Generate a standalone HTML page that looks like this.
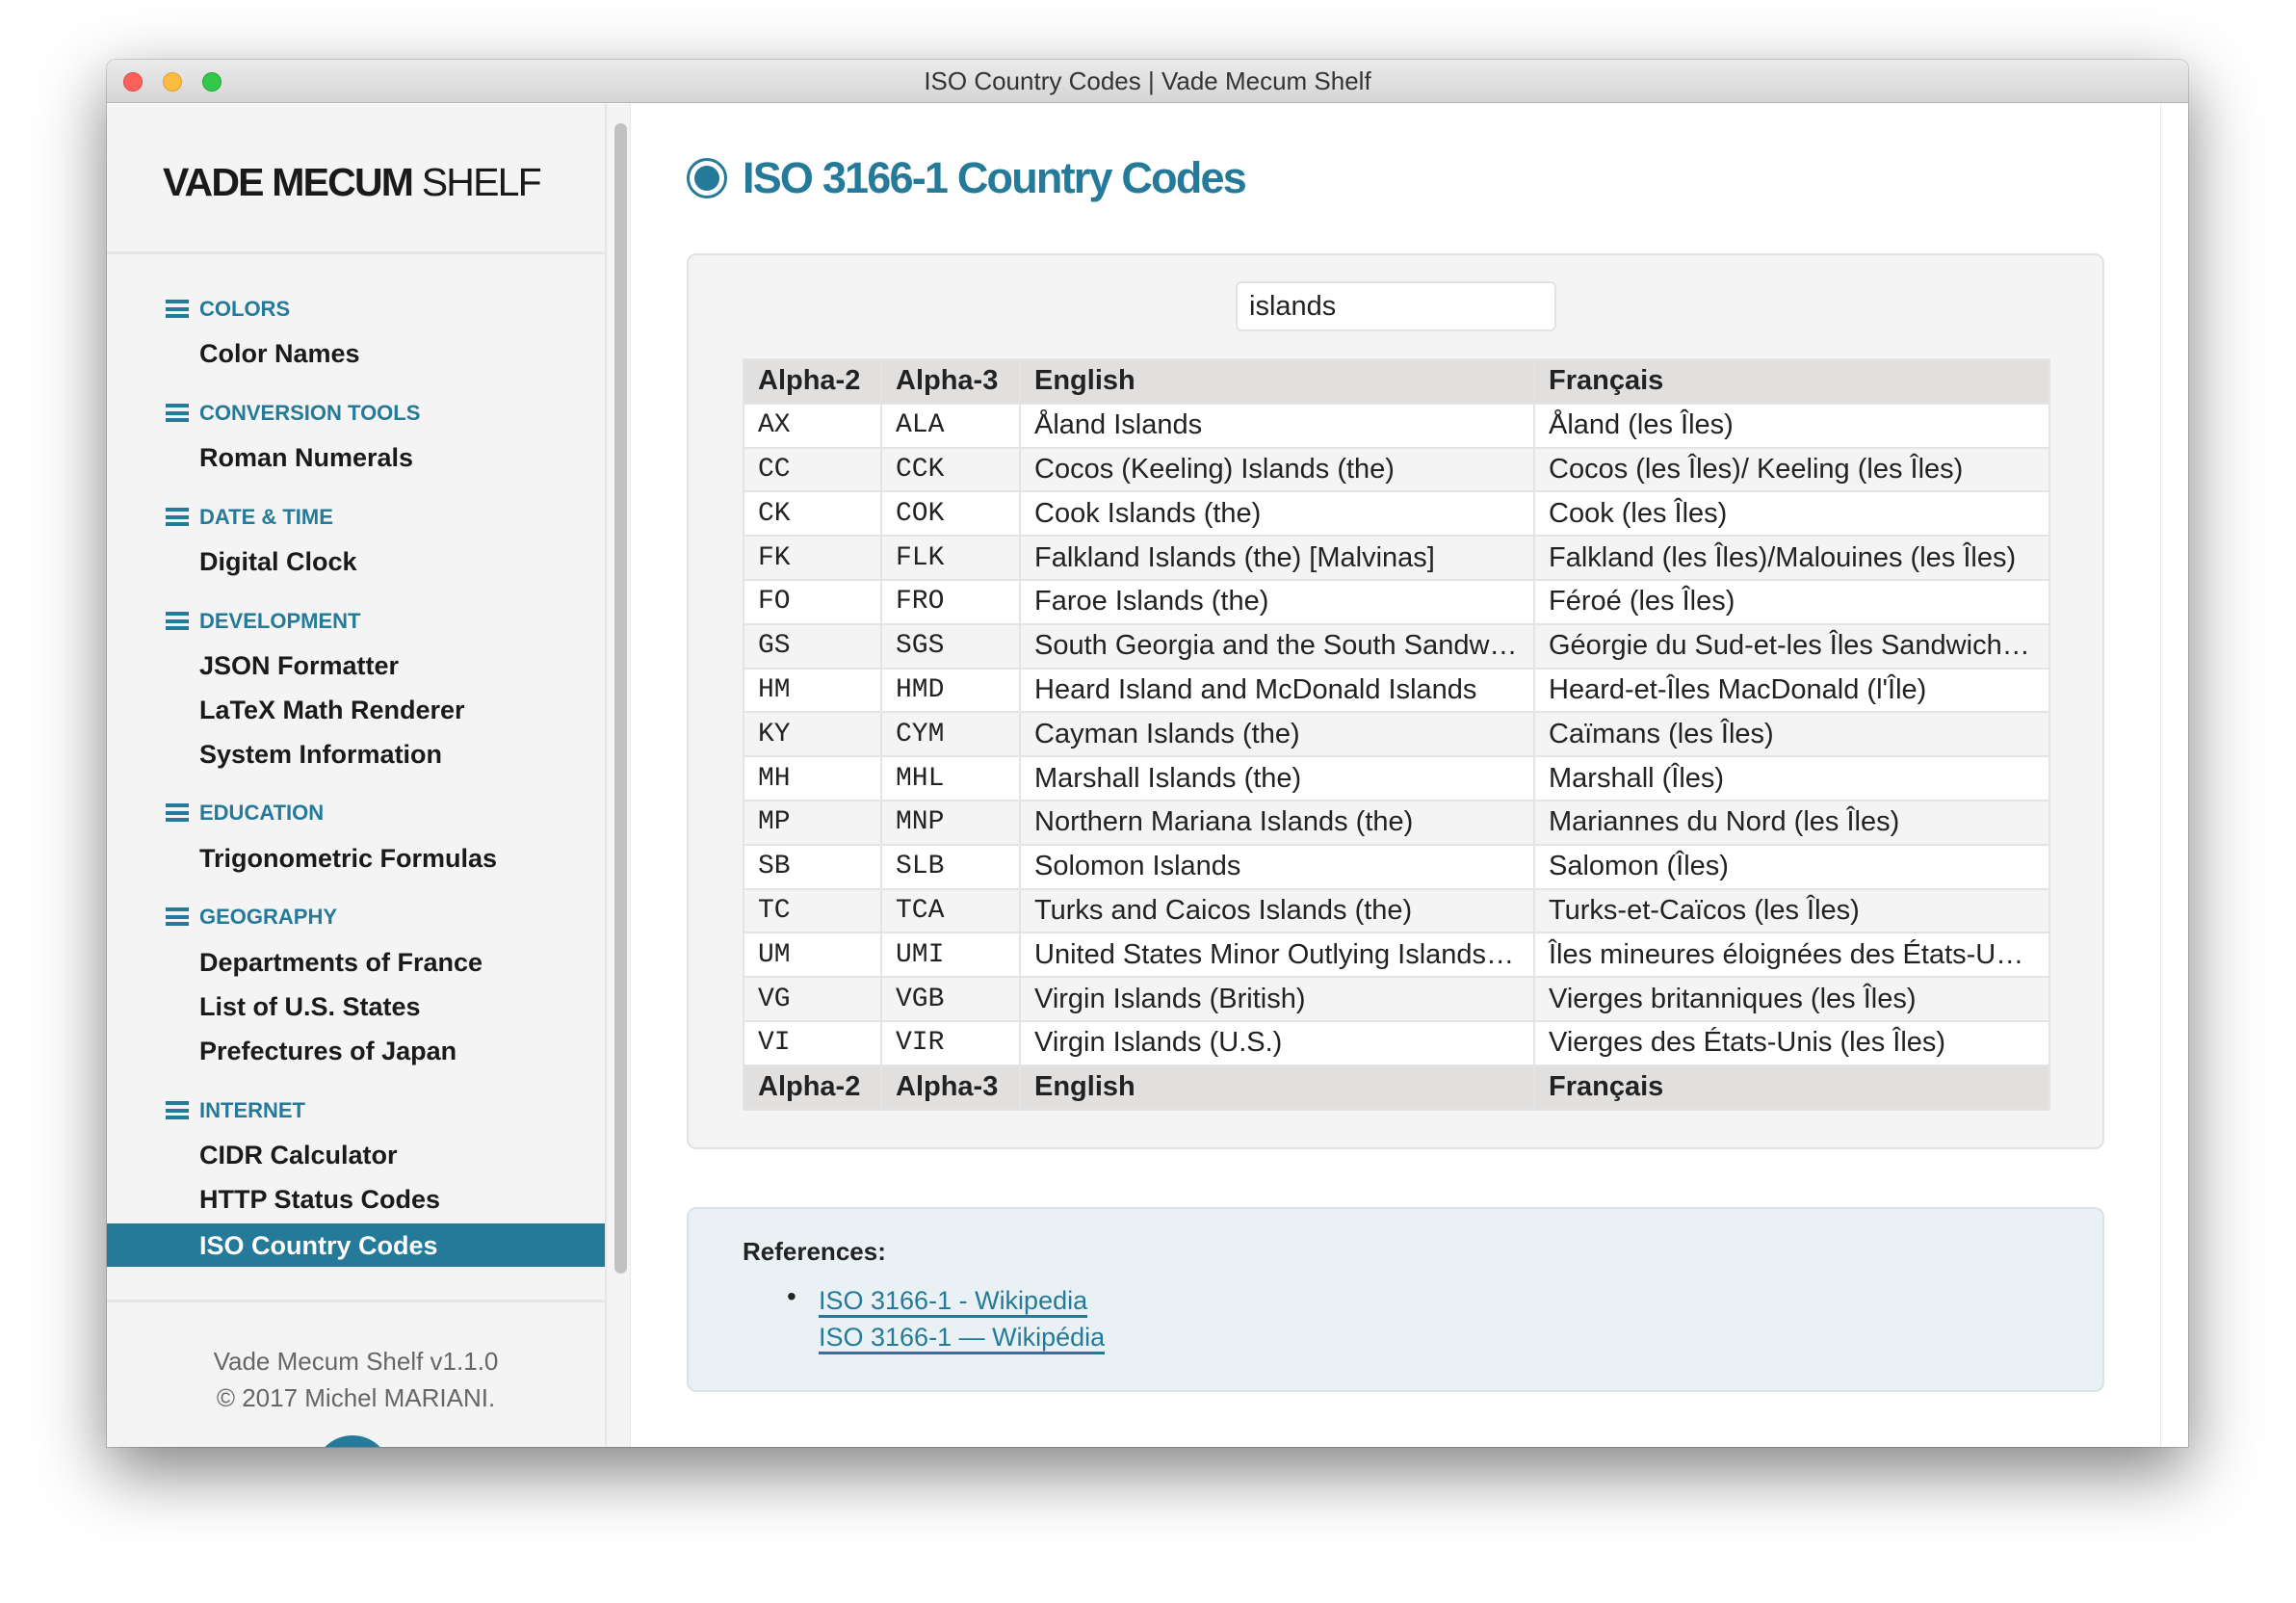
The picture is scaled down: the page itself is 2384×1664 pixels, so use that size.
<!DOCTYPE html>
<html><head><meta charset="utf-8"><style>
*{margin:0;padding:0;box-sizing:border-box}
body{width:2384px;height:1664px;background:#fff;font-family:"Liberation Sans",sans-serif;position:relative;overflow:hidden;color:#222}
.win{position:absolute;left:111px;top:62px;width:2161px;height:1440px;border-radius:9px 9px 0 0;overflow:hidden;background:#fff;box-shadow:0 25px 70px rgba(0,0,0,.5),0 0 0 1px rgba(0,0,0,.15)}
.tb{position:absolute;left:0;top:0;width:100%;height:45px;background:linear-gradient(#ebebeb,#d5d5d5);border-bottom:1px solid #b3b3b3;text-align:center;font-size:26px;line-height:45px;color:#333}
.dot{position:absolute;top:13px;width:20px;height:20px;border-radius:50%}
.side{position:absolute;left:0;top:46px;width:519px;bottom:0;background:#f4f4f4;border-right:2px solid #e6e6e6;overflow:hidden}
.gut{position:absolute;left:519px;top:46px;width:25px;bottom:0;background:#f4f4f4;border-right:1px solid #e8e8e8}
.thumb{position:absolute;left:527px;top:66px;width:13px;height:1194px;border-radius:7px;background:#c1c1c1}
.abs{position:absolute;white-space:nowrap}
.cat{font-size:22px;font-weight:bold;color:#247a98;left:96px}
.ham{position:absolute;left:61px;width:24px;height:19px;border-top:4px solid #247a98;border-bottom:4px solid #247a98}
.ham:after{content:"";position:absolute;left:0;top:4px;width:24px;height:4px;background:#247a98}
.it{font-size:27px;font-weight:bold;color:#1a1a1a;left:96px}
table{position:absolute;left:660px;top:310px;border-collapse:collapse;table-layout:fixed;width:1356px;font-size:29px}
td,th{height:45.8px;padding:0 14px;border:2px solid #e4e4e4;white-space:nowrap;overflow:hidden;text-overflow:ellipsis;text-align:left;color:#222}
th{background:#e1e0df;font-weight:bold}
td.m{font-family:"Liberation Mono",monospace;font-size:28px}
tr:nth-child(odd) td{background:#f4f4f4}
tr:nth-child(even) td{background:#fff}
a{color:#247a98;text-decoration:none;border-bottom:3px solid #247a98}
</style></head><body>
<div class="win">
 <div class="tb">ISO Country Codes | Vade Mecum Shelf
  <div class="dot" style="left:17px;background:#fc605b;border:1px solid #de4a42"></div>
  <div class="dot" style="left:58px;background:#fdbc40;border:1px solid #dea032"></div>
  <div class="dot" style="left:99px;background:#34c84a;border:1px solid #27aa35"></div>
 </div>
 <div class="side">
  <div class="abs" style="left:58px;top:58px;font-size:41px;letter-spacing:-1.8px;color:#1a1a1a"><b>VADE MECUM</b> SHELF</div>
  <div style="position:absolute;left:0;top:153px;width:517px;height:3px;background:#e6e6e6"></div>

  <div class="ham" style="top:203px"></div><div class="abs cat" style="top:200px">COLORS</div>
  <div class="abs it" style="top:244px">Color Names</div>
  <div class="ham" style="top:311px"></div><div class="abs cat" style="top:308px">CONVERSION TOOLS</div>
  <div class="abs it" style="top:352px">Roman Numerals</div>
  <div class="ham" style="top:419px"></div><div class="abs cat" style="top:416px">DATE &amp; TIME</div>
  <div class="abs it" style="top:460px">Digital Clock</div>
  <div class="ham" style="top:527px"></div><div class="abs cat" style="top:524px">DEVELOPMENT</div>
  <div class="abs it" style="top:568px">JSON Formatter</div>
  <div class="abs it" style="top:614px">LaTeX Math Renderer</div>
  <div class="abs it" style="top:660px">System Information</div>
  <div class="ham" style="top:726px"></div><div class="abs cat" style="top:723px">EDUCATION</div>
  <div class="abs it" style="top:768px">Trigonometric Formulas</div>
  <div class="ham" style="top:834px"></div><div class="abs cat" style="top:831px">GEOGRAPHY</div>
  <div class="abs it" style="top:876px">Departments of France</div>
  <div class="abs it" style="top:922px">List of U.S. States</div>
  <div class="abs it" style="top:968px">Prefectures of Japan</div>
  <div class="ham" style="top:1035px"></div><div class="abs cat" style="top:1032px">INTERNET</div>
  <div class="abs it" style="top:1076px">CIDR Calculator</div>
  <div class="abs it" style="top:1122px">HTTP Status Codes</div>
  <div style="position:absolute;left:0;top:1162px;width:517px;height:45px;background:#247a98"></div>
  <div class="abs it" style="top:1170px;color:#fff">ISO Country Codes</div>
  <div style="position:absolute;left:0;top:1241px;width:517px;height:3px;background:#e6e6e6"></div>
  <div class="abs" style="left:0;width:517px;text-align:center;top:1286px;font-size:26px;line-height:38px;color:#666">Vade Mecum Shelf v1.1.0<br>© 2017 Michel MARIANI.</div>
  <div style="position:absolute;left:215px;top:1382px;width:80px;height:80px;border-radius:50%;background:#247a98"></div>
 </div>
 <div class="gut"></div><div class="thumb"></div>
 <div style="position:absolute;left:2132px;top:46px;width:1px;bottom:0;background:#e8e8e8"></div>

 <div style="position:absolute;left:602px;top:102px;width:42px;height:42px;border-radius:50%;border:3px solid #247a98"></div>
 <div style="position:absolute;left:610px;top:110px;width:26px;height:26px;border-radius:50%;background:#247a98"></div>
 <div class="abs" style="left:660px;top:97px;font-size:45px;font-weight:bold;color:#247a98;letter-spacing:-1.8px">ISO 3166-1 Country Codes</div>

 <div style="position:absolute;left:602px;top:201px;width:1472px;height:930px;background:#f4f4f4;border:2px solid #e2e2e2;border-radius:10px"></div>
 <div style="position:absolute;left:1172px;top:230px;width:333px;height:52px;background:#fff;border:2px solid #e2e2e2;border-radius:6px;font-size:29px;line-height:48px;padding-left:12px">islands</div>

 <table>
  <colgroup><col style="width:143px"><col style="width:144px"><col style="width:534px"><col style="width:535px"></colgroup>
  <tr><th>Alpha-2</th><th>Alpha-3</th><th>English</th><th>Français</th></tr>
  <tr><td class="m">AX</td><td class="m">ALA</td><td>Åland Islands</td><td>Åland (les Îles)</td></tr>
  <tr><td class="m">CC</td><td class="m">CCK</td><td>Cocos (Keeling) Islands (the)</td><td>Cocos (les Îles)/ Keeling (les Îles)</td></tr>
  <tr><td class="m">CK</td><td class="m">COK</td><td>Cook Islands (the)</td><td>Cook (les Îles)</td></tr>
  <tr><td class="m">FK</td><td class="m">FLK</td><td>Falkland Islands (the) [Malvinas]</td><td>Falkland (les Îles)/Malouines (les Îles)</td></tr>
  <tr><td class="m">FO</td><td class="m">FRO</td><td>Faroe Islands (the)</td><td>Féroé (les Îles)</td></tr>
  <tr><td class="m">GS</td><td class="m">SGS</td><td>South Georgia and the South Sandwich Islands</td><td>Géorgie du Sud-et-les Îles Sandwich du Sud</td></tr>
  <tr><td class="m">HM</td><td class="m">HMD</td><td>Heard Island and McDonald Islands</td><td>Heard-et-Îles MacDonald (l'Île)</td></tr>
  <tr><td class="m">KY</td><td class="m">CYM</td><td>Cayman Islands (the)</td><td>Caïmans (les Îles)</td></tr>
  <tr><td class="m">MH</td><td class="m">MHL</td><td>Marshall Islands (the)</td><td>Marshall (Îles)</td></tr>
  <tr><td class="m">MP</td><td class="m">MNP</td><td>Northern Mariana Islands (the)</td><td>Mariannes du Nord (les Îles)</td></tr>
  <tr><td class="m">SB</td><td class="m">SLB</td><td>Solomon Islands</td><td>Salomon (Îles)</td></tr>
  <tr><td class="m">TC</td><td class="m">TCA</td><td>Turks and Caicos Islands (the)</td><td>Turks-et-Caïcos (les Îles)</td></tr>
  <tr><td class="m">UM</td><td class="m">UMI</td><td>United States Minor Outlying Islands (the)</td><td>Îles mineures éloignées des États-Unis (les)</td></tr>
  <tr><td class="m">VG</td><td class="m">VGB</td><td>Virgin Islands (British)</td><td>Vierges britanniques (les Îles)</td></tr>
  <tr><td class="m">VI</td><td class="m">VIR</td><td>Virgin Islands (U.S.)</td><td>Vierges des États-Unis (les Îles)</td></tr>
  <tr><th>Alpha-2</th><th>Alpha-3</th><th>English</th><th>Français</th></tr>
 </table>

 <div style="position:absolute;left:602px;top:1191px;width:1472px;height:192px;background:#e9f1f4;border:2px solid #d8e3e7;border-radius:10px"></div>
 <div class="abs" style="left:660px;top:1222px;font-size:26px;font-weight:bold">References:</div>
 <div class="abs" style="left:706px;top:1268px;font-size:28px">•</div>
 <div class="abs" style="left:739px;top:1273px;font-size:27px"><a>ISO 3166-1 - Wikipedia</a></div>
 <div class="abs" style="left:739px;top:1311px;font-size:27px"><a>ISO 3166-1 — Wikipédia</a></div>
</div>
</body></html>
